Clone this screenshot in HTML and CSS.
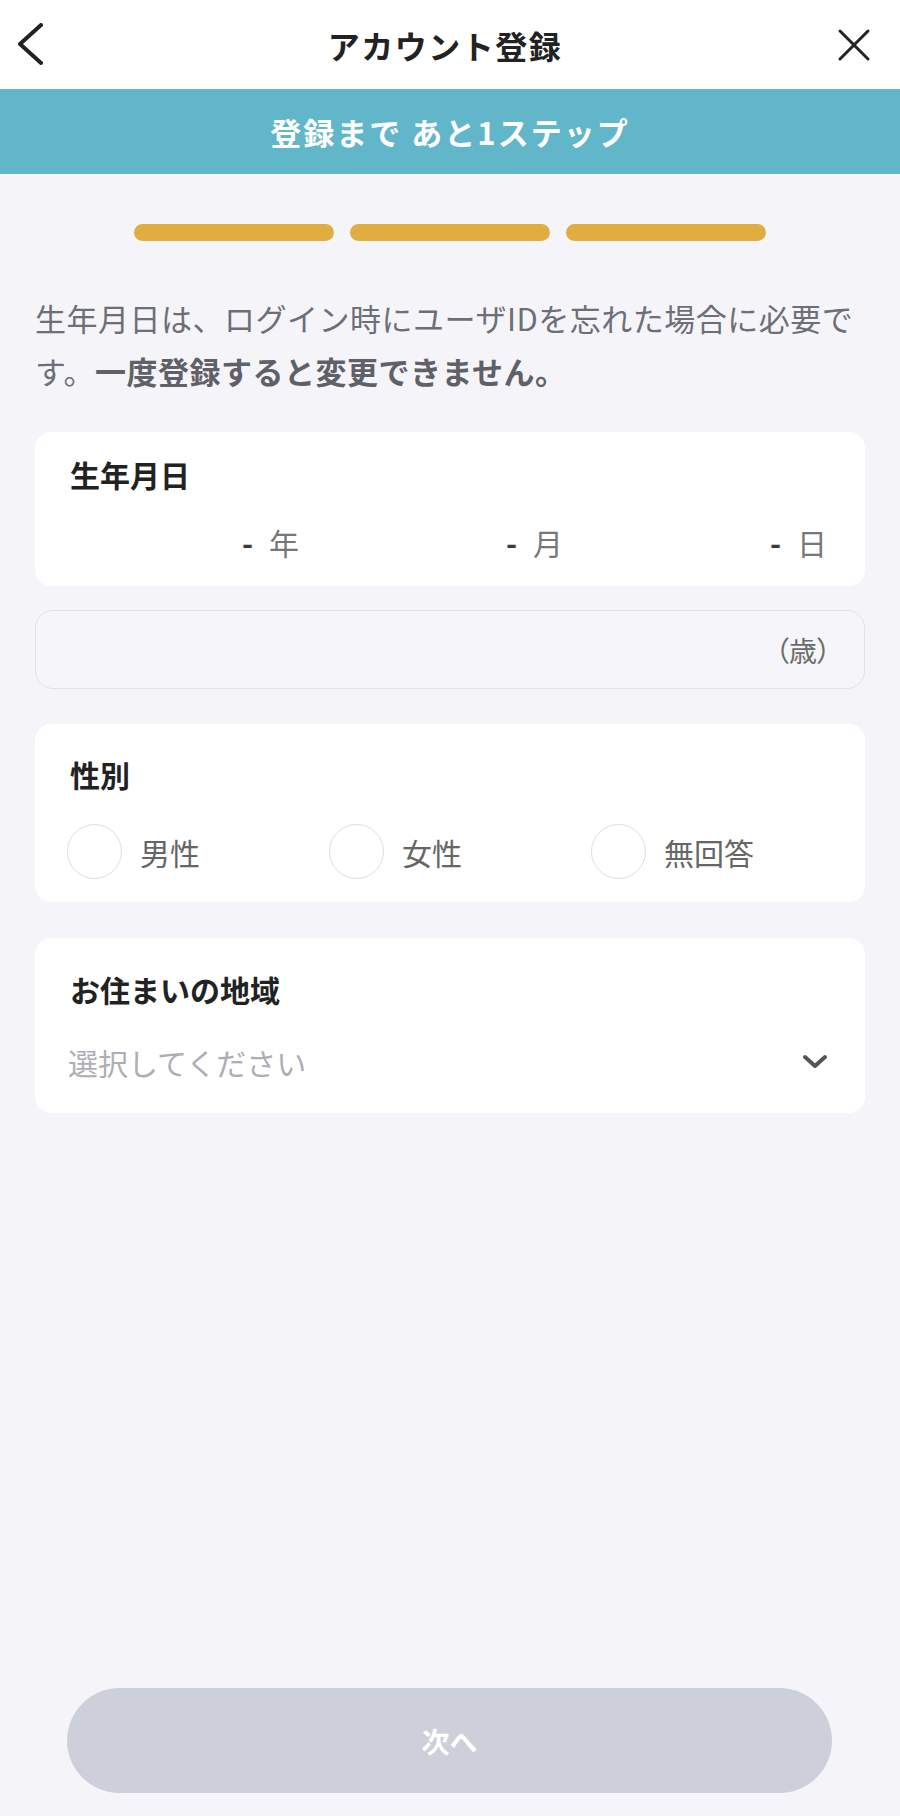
FILE: index.html
```html
<!DOCTYPE html>
<html lang="ja">
<head>
  <meta charset="UTF-8" />
  <meta name="viewport" content="width=device-width, initial-scale=1.0" />
  <title>アカウント登録</title>
  <link rel="stylesheet" href="styles.css">
</head>
<body>
  <div class="page">
    <header class="topbar">
      <svg class="back-icon" viewBox="0 0 30 44" fill="none" stroke="currentColor">
        <path stroke-width="4" stroke-linecap="round" stroke-linejoin="round" d="M25 2 L4 21 L25 40" />
      </svg>
      <h1>アカウント登録</h1>
      <svg class="close-icon" viewBox="0 0 36 36" fill="none" stroke="currentColor">
        <path stroke-width="3" stroke-linecap="round" d="M4 4 L32 32 M32 4 L4 32" />
      </svg>
    </header>

    <div class="banner">登録まで あと1ステップ</div>

    <main class="content">
      <div class="steps">
        <span class="step done"></span>
        <span class="step done"></span>
        <span class="step done"></span>
      </div>

      <p class="note">生年月日は、ログイン時にユーザIDを忘れた場合に必要です。<strong>一度登録すると変更できません。</strong></p>

      <section class="card birth-card">
        <h2 class="card-label">生年月日</h2>
        <div class="date-row">
          <div class="date-part"><span class="dash">-</span>年</div>
          <div class="date-part"><span class="dash">-</span>月</div>
          <div class="date-part"><span class="dash">-</span>日</div>
        </div>
      </section>

      <div class="age-field">（歳）</div>

      <section class="card gender-card">
        <h2 class="card-label">性別</h2>
        <div class="radio-row">
          <label class="radio"><span class="radio-circle"></span>男性</label>
          <label class="radio"><span class="radio-circle"></span>女性</label>
          <label class="radio"><span class="radio-circle"></span>無回答</label>
        </div>
      </section>

      <section class="card area-card">
        <h2 class="card-label">お住まいの地域</h2>
        <div class="select-row">
          <span class="placeholder">選択してください</span>
          <svg class="chevron" viewBox="0 0 26 16" fill="none" stroke="currentColor">
            <path stroke-width="4" stroke-linecap="round" stroke-linejoin="round" d="M3 3 L13 12 L23 3" />
          </svg>
        </div>
      </section>
    </main>

    <footer class="footer">
      <button class="next-btn" disabled>次へ</button>
    </footer>
  </div>
</body>
</html>
```

FILE: styles.css
```css
body {
  margin: 0;
  background: #f5f5f9;
  font-family: "Noto Sans CJK JP", "Noto Sans", sans-serif;
  color: #222;
}
.page {
  min-height: 1816px;
  display: flex;
  flex-direction: column;
}
.topbar {
  height: 89px;
  background: white;
  display: flex;
  align-items: center;
  padding: 0 28px 0 16px;
  color: #222;
}
.topbar h1 {
  flex: 1;
  margin: 0;
  text-align: center;
  font-size: 32px;
  font-weight: 700;
  letter-spacing: 1.5px;
  padding-left: 8px;
}
.back-icon {
  width: 30px;
  height: 44px;
  flex-shrink: 0;
}
.close-icon {
  width: 36px;
  height: 36px;
  flex-shrink: 0;
}
.banner {
  height: 85px;
  background: #62b6c9;
  color: white;
  font-size: 31px;
  font-weight: 700;
  letter-spacing: 2px;
  display: flex;
  align-items: center;
  justify-content: center;
}
.content {
  padding: 0 35px;
}
.steps {
  display: flex;
  justify-content: center;
  gap: 16px;
  margin-top: 50px;
}
.step {
  width: 200px;
  height: 17px;
  border-radius: 9px;
  background: #dcdce4;
}
.step.done {
  background: #dfad40;
}
.note {
  margin: 50px 0 35px;
  font-size: 31px;
  line-height: 53px;
  letter-spacing: 0.5px;
  color: #6e6e78;
}
.note strong {
  color: #606069;
  font-weight: 700;
}
.card {
  background: white;
  border-radius: 16px;
}
.card-label {
  margin: 0;
  font-size: 30px;
  line-height: 40px;
  font-weight: 700;
  color: #222;
}
.birth-card {
  padding: 22px 38px 24px 0;
}
.birth-card .card-label {
  padding-left: 35px;
}
.date-row {
  display: grid;
  grid-template-columns: repeat(3, 1fr);
  margin-top: 28px;
  font-size: 30px;
  line-height: 40px;
  color: #777;
}
.date-part {
  text-align: right;
}
.dash {
  color: #3a3a3a;
  font-weight: 700;
  margin-right: 16px;
}
.age-field {
  margin-top: 24px;
  height: 77px;
  border: 1px solid #e1e1e7;
  border-radius: 18px;
  background: #f6f6fa;
  display: flex;
  align-items: center;
  justify-content: flex-end;
  padding-right: 33px;
  font-size: 28px;
  color: #6b6b6b;
  font-feature-settings: "palt";
}
.gender-card {
  margin-top: 35px;
  padding: 30px 35px 23px;
}
.radio-row {
  display: grid;
  grid-template-columns: repeat(3, 262px);
  margin-top: 30px;
  margin-left: -3px;
}
.radio {
  display: flex;
  align-items: center;
  gap: 18px;
  font-size: 30px;
  color: #666;
}
.radio-circle {
  width: 53px;
  height: 53px;
  border: 1px solid #dedede;
  border-radius: 50%;
  flex-shrink: 0;
}
.area-card {
  margin-top: 36px;
  padding: 31px 37px 31px 35px;
}
.select-row {
  display: flex;
  align-items: center;
  justify-content: space-between;
  margin-top: 33px;
  height: 40px;
}
.placeholder {
  font-size: 30px;
  color: #aeaeb5;
  margin-left: -2px;
}
.chevron {
  width: 26px;
  height: 16px;
  color: #555;
}
.footer {
  margin-top: auto;
  padding: 0 68px 23px 67px;
}
.next-btn {
  width: 100%;
  height: 105px;
  border: none;
  border-radius: 53px;
  background: #cdcfda;
  color: white;
  font-family: inherit;
  font-size: 28px;
  font-weight: 700;
}
```
